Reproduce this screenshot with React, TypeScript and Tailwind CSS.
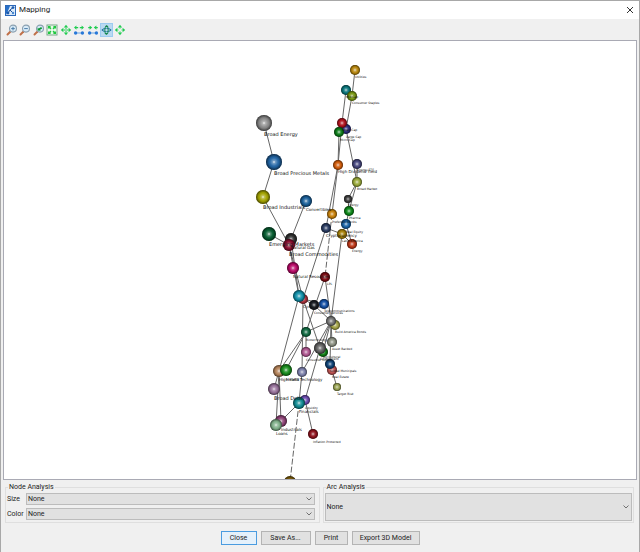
import React from 'react';

interface MapNode {
  x: number;
  y: number;
  r: number;
  color: string;
  label?: string;
  size?: number;
  dx?: number;
  dy?: number;
}

// Drawn back to front
const nodes: MapNode[] = [
  { x: 355, y: 70, r: 5, color: '#b8860c', label: 'Utilities', size: 3 },
  { x: 346, y: 90, r: 5, color: '#08747a', label: 'Mid Cap', size: 3 },
  { x: 352, y: 96, r: 5, color: '#789810', label: 'Consumer Staples', size: 3 },
  { x: 346, y: 129, r: 5, color: '#2a2a78', label: 'Large Cap', size: 3, dy: 1 },
  { x: 342, y: 123, r: 5, color: '#b0101c', label: 'Small Cap', size: 3 },
  { x: 339, y: 132, r: 5, color: '#0a7a16', label: 'Micro Cap', size: 3, dx: 1, dy: 1 },
  { x: 338, y: 165, r: 5, color: '#d05a08', label: 'High Dividend Yield', size: 4, dy: -1 },
  { x: 357, y: 164, r: 5, color: '#45457c', label: 'Energy ETF', size: 3, dy: -1 },
  { x: 357, y: 182, r: 5, color: '#98a838', label: 'Broad Market', size: 3 },
  { x: 348, y: 199, r: 4, color: '#3a3a3a', label: 'Energy', size: 3 },
  { x: 349, y: 211, r: 5, color: '#0a8616', label: 'Pharma', size: 3 },
  { x: 346, y: 224, r: 5, color: '#1762a6', label: 'Real Equity', size: 3, dy: 1 },
  { x: 332, y: 214, r: 5, color: '#c88008', label: 'Preferred Stocks', size: 3, dy: 1 },
  { x: 342, y: 234, r: 5, color: '#a88208', label: 'Latin America', size: 3 },
  { x: 326, y: 228, r: 5, color: '#283a60', label: 'Cryptocurrency', size: 4 },
  { x: 352, y: 244, r: 5, color: '#bc3414', label: 'Energy', size: 3 },
  { x: 264, y: 123, r: 8, color: '#8a8a8a', label: 'Broad Energy', size: 5 },
  { x: 274, y: 162, r: 8, color: '#2064a4', label: 'Broad Precious Metals', size: 5 },
  { x: 263, y: 197, r: 7, color: '#a2a200', label: 'Broad Industrials', size: 5 },
  { x: 306, y: 201, r: 6, color: '#185e98', label: 'Convertibles', size: 4 },
  { x: 269, y: 234, r: 7, color: '#065c30', label: 'Emerging Markets', size: 5 },
  { x: 291, y: 239, r: 6, color: '#2e2e2e', label: 'Natural Gas', size: 4 },
  { x: 289, y: 245, r: 6, color: '#8c0e2e', label: 'Broad Commodities', size: 5 },
  { x: 293, y: 268, r: 6, color: '#b80866', label: 'Natural Resources', size: 4 },
  { x: 325, y: 277, r: 5, color: '#7c0a12', label: 'LPL', size: 3, dx: 2 },
  { x: 303, y: 299, r: 5, color: '#a8303a', label: 'Cyclicals', size: 4 },
  { x: 299, y: 296, r: 6, color: '#1090aa' },
  { x: 314, y: 305, r: 5, color: '#181c22', label: 'Consumer Services', size: 3, dy: 1 },
  { x: 324, y: 304, r: 5, color: '#104ea4', label: 'Telecommunications', size: 3 },
  { x: 335, y: 325, r: 5, color: '#a2a244', label: 'Build America Bonds', size: 3 },
  { x: 331, y: 321, r: 5, color: '#747474' },
  { x: 306, y: 332, r: 5, color: '#106a42', label: 'Biotechnology', size: 3, dy: 1 },
  { x: 332, y: 342, r: 5, color: '#8c9082', label: 'Asset Backed', size: 3 },
  { x: 306, y: 352, r: 5, color: '#b05690', label: 'Consumer Goods', size: 3, dy: 1 },
  { x: 323, y: 352, r: 5, color: '#0c7c12', label: 'Agricultural', size: 3, dy: -2 },
  { x: 320, y: 348, r: 6, color: '#606060', label: 'Government', size: 3, dy: 3 },
  { x: 332, y: 370, r: 5, color: '#bc5050', label: 'Real Estate', size: 3 },
  { x: 330, y: 364, r: 5, color: '#0c4074', label: 'Global Municipals', size: 3 },
  { x: 337, y: 387, r: 4, color: '#96a050', label: 'Target Risk', size: 3, dy: 1 },
  { x: 279, y: 371, r: 6, color: '#b48258', label: 'High Yield', size: 4 },
  { x: 286, y: 370, r: 6, color: '#188c1c', label: 'Health', size: 4, dy: 1 },
  { x: 302, y: 372, r: 5, color: '#7c80ac', label: 'Technology', size: 4, dx: -2 },
  { x: 274, y: 389, r: 6, color: '#967099', label: 'Broad Debt', size: 5 },
  { x: 305, y: 400, r: 5, color: '#6a48ac', label: 'Liquidity', size: 3, dy: 1 },
  { x: 299, y: 403, r: 6, color: '#108a92', label: 'Financials', size: 4 },
  { x: 281, y: 421, r: 6, color: '#8c4074', label: 'Industrials', size: 4 },
  { x: 276, y: 425, r: 6, color: '#80b08a', label: 'Loans', size: 4 },
  { x: 313, y: 434, r: 5, color: '#8e101a', label: 'Inflation Protected', size: 3, dy: 1 },
  { x: 290, y: 482, r: 6, color: '#7a5a08' },
];

interface Arc {
  from: [number, number];
  to: [number, number];
  dashed?: boolean;
}

const arcs: Arc[] = [
  { from: [264, 123], to: [274, 162] },
  { from: [274, 162], to: [263, 197] },
  { from: [263, 197], to: [289, 245] },
  { from: [306, 201], to: [291, 239] },
  { from: [269, 234], to: [289, 245] },
  { from: [291, 239], to: [299, 296] },
  { from: [289, 245], to: [303, 299] },
  { from: [289, 245], to: [299, 296] },
  { from: [355, 70], to: [352, 96] },
  { from: [346, 90], to: [342, 123] },
  { from: [352, 96], to: [346, 129] },
  { from: [346, 90], to: [352, 96] },
  { from: [346, 129], to: [357, 182] },
  { from: [342, 123], to: [338, 165] },
  { from: [339, 132], to: [338, 165] },
  { from: [338, 165], to: [332, 214] },
  { from: [338, 165], to: [326, 228] },
  { from: [357, 164], to: [357, 182] },
  { from: [357, 182], to: [348, 199] },
  { from: [357, 182], to: [349, 211] },
  { from: [348, 199], to: [349, 211] },
  { from: [349, 211], to: [346, 224] },
  { from: [346, 224], to: [342, 234] },
  { from: [346, 224], to: [352, 244] },
  { from: [326, 228], to: [342, 234] },
  { from: [342, 234], to: [352, 244] },
  { from: [326, 228], to: [303, 299] },
  { from: [332, 214], to: [325, 277], dashed: true },
  { from: [342, 234], to: [331, 321] },
  { from: [325, 277], to: [331, 321] },
  { from: [325, 277], to: [306, 332] },
  { from: [303, 299], to: [314, 305] },
  { from: [303, 299], to: [324, 304] },
  { from: [314, 305], to: [331, 321] },
  { from: [303, 299], to: [320, 348] },
  { from: [299, 296], to: [279, 371] },
  { from: [303, 299], to: [302, 372] },
  { from: [331, 321], to: [306, 332] },
  { from: [306, 332], to: [306, 352] },
  { from: [306, 332], to: [279, 371] },
  { from: [331, 321], to: [332, 342] },
  { from: [331, 321], to: [320, 348] },
  { from: [331, 321], to: [323, 352] },
  { from: [331, 321], to: [302, 372] },
  { from: [331, 321], to: [330, 364] },
  { from: [320, 348], to: [305, 400] },
  { from: [330, 364], to: [337, 387] },
  { from: [306, 332], to: [286, 370] },
  { from: [279, 371], to: [274, 389] },
  { from: [279, 371], to: [281, 421] },
  { from: [279, 371], to: [276, 425] },
  { from: [302, 372], to: [299, 403] },
  { from: [299, 403], to: [281, 421] },
  { from: [305, 400], to: [313, 434] },
  { from: [299, 403], to: [290, 482], dashed: true },
];

const NetworkMap: React.FC = () => (
  <svg
    viewBox="4 41 632 438"
    className="block w-full font-['DejaVu_Sans',sans-serif]"
    role="img"
    aria-label="Mapping"
  >
    <defs>
      {/* Shading laid over each flat coloured ball */}
      <radialGradient id="shine">
        <stop offset="0%" stopColor="#ffffff" stopOpacity="0.9" />
        <stop offset="20%" stopColor="#ffffff" stopOpacity="0.35" />
        <stop offset="50%" stopColor="#ffffff" stopOpacity="0.05" />
        <stop offset="65%" stopColor="#000000" stopOpacity="0.05" />
        <stop offset="85%" stopColor="#000000" stopOpacity="0.35" />
        <stop offset="100%" stopColor="#000000" stopOpacity="0.6" />
      </radialGradient>
    </defs>
    {arcs.map((arc, i) => (
      <line
        key={i}
        x1={arc.from[0]}
        y1={arc.from[1]}
        x2={arc.to[0]}
        y2={arc.to[1]}
        stroke="#666666"
        strokeWidth="1"
        strokeDasharray={arc.dashed ? '6 2' : undefined}
      />
    ))}
    {nodes.map((node, i) => (
      <g key={i}>
        <circle cx={node.x} cy={node.y} r={node.r} fill={node.color} />
        <circle cx={node.x} cy={node.y} r={node.r} fill="url(#shine)" />
      </g>
    ))}
    {nodes.map((node, i) =>
      node.label ? (
        <text
          key={i}
          x={node.x + (node.dx ?? 0)}
          y={node.y + node.r + (node.size ?? 3) + (node.dy ?? 0)}
          fontSize={node.size}
          fill="#111111"
        >
          {node.label}
        </text>
      ) : null
    )}
  </svg>
);

const Magnifier: React.FC<{ children: React.ReactNode }> = ({ children }) => (
  <svg viewBox="0 0 12 12" className="size-3">
    <path d="M1.5 10.5L4.5 7.5" stroke="#c07048" strokeWidth="2" strokeLinecap="round" />
    <circle cx="7" cy="4.6" r="3.5" fill="#d8ebf8" stroke="#8ba0b0" strokeWidth="1.1" />
    {children}
  </svg>
);

const FourArrows: React.FC<{ open?: boolean }> = ({ open }) => (
  <svg viewBox="0 0 12 12" className="size-3" fill="#20cc50">
    <path d="M6 0.8L8.2 3.4H3.8zM6 11.2L3.8 8.6h4.4zM0.8 6L3.4 3.8v4.4zM11.2 6L8.6 8.2V3.8z" />
    {open ? (
      <path d="M5.4 3.4h1.2v1H5.4zM5.4 7.6h1.2v1H5.4zM3.4 5.4h1v1.2h-1zM7.6 5.4h1v1.2h-1z" />
    ) : (
      <path d="M5.5 3.4h1v1.8H5.5zM5.5 6.8h1v1.8H5.5zM3.4 5.5h1.8v1H3.4zM6.8 5.5h1.8v1H6.8zM5.6 5.6h.8v.8h-.8z" />
    )}
  </svg>
);

const NodeSpacing: React.FC<{ inward?: boolean }> = ({ inward }) => (
  <svg viewBox="0 0 12 12" className="size-3">
    {inward ? (
      <path d="M1.2 3h1.4V1.5L5.2 3.6 2.6 5.7V4.2H1.2zM10.8 3H9.4V1.5L6.8 3.6l2.6 2.1V4.2h1.4z" fill="#20cc50" />
    ) : (
      <path d="M1 3.6L3.4 1.5V3h1.8v1.2H3.4v1.5zM11 3.6L8.6 1.5V3H6.8v1.2h1.8v1.5z" fill="#20cc50" />
    )}
    <path d="M2.5 9h7" stroke="#6aa6e4" strokeWidth="1" />
    <circle cx="2.6" cy="9" r="1.7" fill="#2878d8" />
    <circle cx="9.4" cy="9" r="1.7" fill="#2878d8" />
  </svg>
);

const tools = [
  {
    name: 'Zoom in',
    icon: (
      <Magnifier>
        <path d="M5.2 4.6h3.6M7 2.8v3.6" stroke="#4a7ca8" strokeWidth="1" />
      </Magnifier>
    ),
  },
  {
    name: 'Zoom out',
    icon: (
      <Magnifier>
        <path d="M5.2 4.6h3.6" stroke="#4a7ca8" strokeWidth="1" />
      </Magnifier>
    ),
  },
  {
    name: 'Zoom to selection',
    icon: (
      <Magnifier>
        <path d="M4.6 6.6V3.6l1 1L8.2 3l1 1.6-2.2 1.2.8.9z" fill="#109838" />
      </Magnifier>
    ),
  },
  {
    name: 'Fit to window',
    icon: (
      <svg viewBox="0 0 12 12" className="size-3">
        <rect x="1" y="1" width="10" height="10" fill="#e8fbe9" stroke="#78a888" strokeWidth="1" />
        <path d="M2 2h3L4.2 2.9l1.3 1.3-1.2 1.2L3 4.1 2 5zM10 2v3l-1-.9-1.3 1.3-1.2-1.2 1.3-1.3L7 2zM2 10V7l1 .9 1.3-1.3 1.2 1.2-1.3 1.3L5 10zM10 10H7l.8-.9-1.3-1.3 1.2-1.2L9 7.9l1-.9z" fill="#20c840" />
      </svg>
    ),
  },
  { name: 'Pan', icon: <FourArrows /> },
  { name: 'Increase spacing', icon: <NodeSpacing /> },
  { name: 'Decrease spacing', icon: <NodeSpacing inward /> },
  {
    name: 'Rotate',
    active: true,
    icon: (
      <svg viewBox="0 0 12 12" className="size-3" fill="none">
        <ellipse cx="6" cy="6" rx="4.6" ry="1.8" stroke="#3080b0" strokeWidth="1" />
        <ellipse cx="6" cy="6" rx="1.8" ry="4.4" stroke="#168850" strokeWidth="1.1" />
        <path d="M6 0.5L8.2 2.8H5zM6 11.5L3.8 9.2H7z" fill="#168850" />
        <path d="M0.3 6L2.6 4.4v3.2zM11.7 6L9.4 7.6V4.4z" fill="#2875a0" />
      </svg>
    ),
  },
  { name: 'Move', icon: <FourArrows open /> },
];

interface PickerProps {
  id: string;
  className: string;
}

const Picker: React.FC<PickerProps> = ({ id, className }) => (
  <div className="relative flex-1">
    <select
      id={id}
      defaultValue="None"
      className={`block w-full appearance-none border border-[#bcbcbc] bg-[#e1e1e1] pl-px text-[7px] leading-[10px] ${className}`}
    >
      <option>None</option>
    </select>
    <svg
      viewBox="0 0 6 4"
      className="pointer-events-none absolute inset-y-0 right-[3px] my-auto h-1 w-1.5"
      fill="none"
      stroke="#707070"
    >
      <path d="M0.5 0.5L3 3L5.5 0.5" />
    </svg>
  </div>
);

const App: React.FC = () => {
  return (
    <div className="border border-[#a8a8a8] bg-[#f0f0f0] font-['Roboto',sans-serif] text-[7px] leading-[10px] text-[#1c1c1c]">
      <header className="flex h-[18px] items-center justify-between bg-white pr-[5px] pl-1">
        <div className="flex items-center gap-[3px]">
          <svg viewBox="0 0 11 11" className="size-[11px]" fill="none">
            <rect x="0.5" y="0.5" width="10" height="10" fill="#dceaf8" stroke="#2c68b8" />
            <path d="M1 1h4L3 6l-2 4z" fill="#2870c8" />
            <path d="M3 8L5 5L8 2.5M5 5L8 8" stroke="#1c4f98" strokeWidth="1" />
            <circle cx="8" cy="2.6" r="1.4" fill="#1c5cb0" />
            <circle cx="3" cy="8" r="1.4" fill="#1c5cb0" />
            <circle cx="8" cy="8" r="1.2" fill="#4888d0" />
          </svg>
          <h1 className="text-[8px] leading-3">Mapping</h1>
        </div>
        <button type="button" aria-label="Close window">
          <svg viewBox="0 0 8 8" className="size-2" stroke="#333333" fill="none">
            <path d="M1 1L7 7M7 1L1 7" />
          </svg>
        </button>
      </header>

      {/* Toolbar */}
      <div className="flex h-[21px] items-center pl-1">
        <div className="flex w-[121px] justify-between">
          {tools.map((tool) => (
            <button
              key={tool.name}
              type="button"
              aria-label={tool.name}
              className={`flex h-3.5 w-[13px] items-center justify-center ${
                tool.active ? 'border border-[#9ccbf0] bg-[#b9d9f1]' : ''
              }`}
            >
              {tool.icon}
            </button>
          ))}
        </div>
      </div>

      <main className="mx-[2px] border border-[#a9aab4] bg-white">
        <NetworkMap />
      </main>

      {/* Analysis options */}
      <div className="flex gap-[3px] pt-[3px] pr-[5px] pl-1">
        <fieldset className="min-w-0 flex-1 border border-[#dfdfdf] pt-px pr-1 pb-[2px] pl-px">
          <legend className="ml-px px-px leading-[9px]">Node Analysis</legend>
          <div className="flex items-center">
            <label htmlFor="node-size" className="w-[19px]">Size</label>
            <Picker id="node-size" className="h-3" />
          </div>
          <div className="mt-[3px] flex items-center">
            <label htmlFor="node-color" className="w-[19px]">Color</label>
            <Picker id="node-color" className="h-3" />
          </div>
        </fieldset>
        <fieldset className="min-w-0 flex-1 border border-[#dfdfdf] pt-px pr-px pb-px pl-px">
          <legend className="ml-px px-px leading-[9px]">
            <label htmlFor="arc">Arc Analysis</label>
          </legend>
          <div className="flex">
            <Picker id="arc" className="h-7" />
          </div>
        </fieldset>
      </div>

      <footer className="flex justify-center gap-1 pt-2 pb-[7px]">
        <button type="button" className="h-3.5 w-9 border border-[#4a9ce0] bg-[#e5f1fb]">Close</button>
        <button type="button" className="h-3.5 w-[50px] border border-[#b4b4b4] bg-[#e1e1e1]">Save As...</button>
        <button type="button" className="h-3.5 w-[33px] border border-[#b4b4b4] bg-[#e1e1e1]">Print</button>
        <button type="button" className="h-3.5 w-[68px] border border-[#b4b4b4] bg-[#e1e1e1]">Export 3D Model</button>
      </footer>
    </div>
  );
};

export default App;
